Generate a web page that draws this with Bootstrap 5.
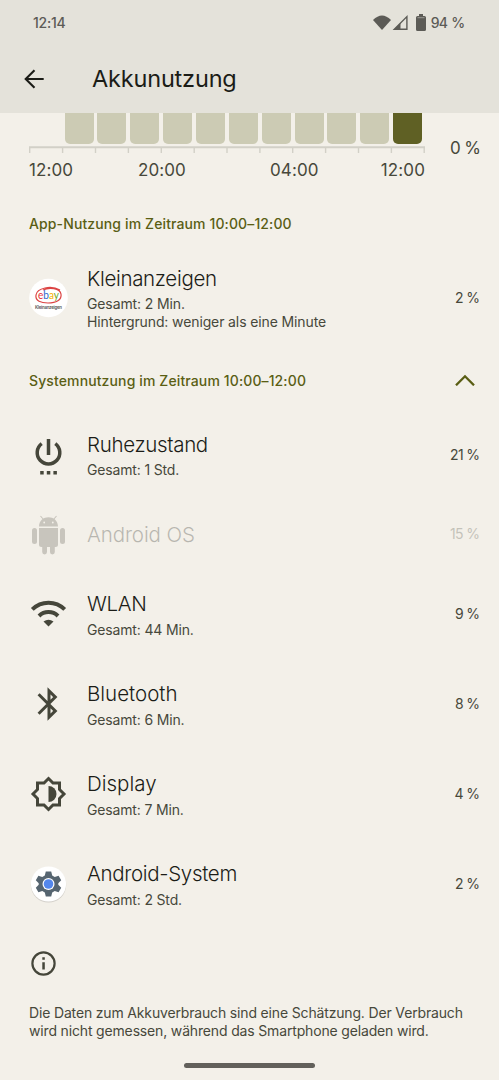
<!DOCTYPE html>
<html lang="de" data-bs-theme="light">
<head>
<meta charset="utf-8">
<meta name="viewport" content="width=device-width, initial-scale=1">
<title>Akkunutzung</title>
<link rel="stylesheet" href="https://cdn.jsdelivr.net/npm/bootstrap@5.3.0/dist/css/bootstrap.min.css">
<style>
  body { font-family: Inter, "Liberation Sans", sans-serif; background: #f3f0e9; color: #1b1c17; height: 1080px; overflow: hidden; }
  .top-area { background: #e4e2da; height: 113px; }
  .status-row { height: 46px; padding: 0 34.5px 1px 33px; color: #5c5b56; font-size: 14px; font-weight: 500; }
  .clock { letter-spacing: -.25px; }
  .battery { margin-left: -7px; }
  .level { letter-spacing: -.7px; word-spacing: 1px; margin-left: 4.5px; }
  .title-row { height: 66px; padding-left: 24px; }
  .screen-title { font-size: 23.5px; line-height: 30px; font-weight: 370; margin-left: 48px; letter-spacing: -.18px; }
  .chart-area { height: 91px; padding-left: 29px; }
  .plot { width: 396px; }
  .bar-row { height: 31px; padding-left: 35.6px; gap: 3.87px; }
  .usage-bar { width: 29px; height: 31px; background: #cccbb4; border-radius: 0 0 5px 5px; }
  .usage-bar.current { background: #5f6024; }
  .axis { display: block; margin-top: 2px; }
  .time-row { height: 24px; margin-top: 4.500px; font-size: 17px; line-height: 24px; color: #47483b; letter-spacing: .1px; }
  .time-row > :nth-child(1) { width: 109px; }
  .time-row > :nth-child(2) { width: 132px; }
  .zero-label { font-size: 17px; line-height: 24px; color: #47483b; margin: 23px 0 0 25px; letter-spacing: -.6px; white-space: nowrap; }
  .section-head { color: #5a5e14; font-size: 14px; font-weight: 550; letter-spacing: .12px; padding: 0 24px 2px 29px; }
  .h-first { height: 40px; }
  .h-second { height: 58px; }
  .usage-row { height: 90px; padding: 0 19.500px 0 29px; }
  .row-tall { height: 108px; }
  .row-short { height: 69px; }
  .row-icon { width: 39px; height: 40px; margin-right: 19px; }
  .name { font-size: 20.5px; line-height: 28px; margin-bottom: 2px; font-weight: 360; letter-spacing: -.32px; }
  .name.loose { letter-spacing: 0; }
  .row-short .name { margin: 0; letter-spacing: -.1px; }
  .detail { font-size: 14px; line-height: 18px; color: #47483b; letter-spacing: -.12px; white-space: nowrap; }
  .usage-row:not(.row-tall) .detail { letter-spacing: -.16px; }
  .row-short ~ .usage-row .detail { margin-bottom: -1px; position: static; padding-top: 1px; line-height: 18px; }
  .share { font-size: 14px; color: #47483b; letter-spacing: -.6px; padding-bottom: 1.500px; }
  .faded { opacity: .27; }
  .note { padding: 21px 29px 0; }
  .note p { font-size: 14px; line-height: 18px; color: #47483b; margin: 26px 0 0; letter-spacing: -.16px; white-space: nowrap; }
  .home-pill { width: 131px; height: 5px; background: #62605b; margin-top: 22.5px; }
</style>
<script src="https://cdn.jsdelivr.net/npm/bootstrap@5.3.0/dist/js/bootstrap.bundle.min.js"></script>
</head>
<body class="d-flex flex-column">
<header class="top-area">
  <div class="status-row d-flex align-items-center">
    <span class="clock">12:14</span>
    <svg class="ms-auto" width="50" height="20" viewBox="0 0 50 20"><path d="M0 7Q9-2 18 7L9 17Z" fill="#5c5b56"/><path d="M33.900 3.600V16.300H21.300Z" fill="none" stroke="#5c5b56" stroke-width="1.4"/><path d="M20.500 17L27.500 9.800V17Z" fill="#5c5b56"/></svg>
    <svg class="battery" width="10" height="17" viewBox="0 0 10 17"><path d="M3 0h4v2h1.500A1.500 1.500 0 0 1 10 3.500V15.500A1.500 1.500 0 0 1 8.500 17h-7A1.500 1.500 0 0 1 0 15.500V3.500A1.500 1.500 0 0 1 1.500 2H3z" fill="#5c5b56"/><path d="M1.500 3.700h7" stroke="#9b9993" stroke-width="1"/></svg>
    <span class="level">94 %</span>
  </div>
  <div class="title-row d-flex align-items-center">
    <svg width="20" height="20" viewBox="0 0 20 20" fill="none" stroke="#1b1c17" stroke-width="2.1"><path d="M19.700 10H2M10.500 1.200L1.700 10l8.800 8.800"/></svg>
    <h1 class="screen-title mb-0">Akkunutzung</h1>
  </div>
</header>
<main>
  <section class="chart-area d-flex">
    <div class="plot">
      <div class="bar-row d-flex">
        <div class="usage-bar"></div><div class="usage-bar"></div><div class="usage-bar"></div><div class="usage-bar"></div><div class="usage-bar"></div><div class="usage-bar"></div><div class="usage-bar"></div><div class="usage-bar"></div><div class="usage-bar"></div><div class="usage-bar"></div><div class="usage-bar current"></div>
      </div>
      <svg class="axis" width="396" height="7" viewBox="0 0 396 7" fill="none" stroke="#d2d0c7" stroke-width="1.400"><path d="M0 1.200H396" stroke-width="2"/><path d="M.7 1v6M33.600 1v6M66.500 1v6M99.400 1v6M132.300 1v6M165.200 1v6M198 1v6M230.900 1v6M263.700 1v6M296.600 1v6M329.500 1v6M362.400 1v6M395.200 1v6"/></svg>
      <div class="time-row d-flex"><span>12:00</span><span>20:00</span><span>04:00</span><span class="ms-auto">12:00</span></div>
    </div>
    <span class="zero-label">0 %</span>
  </section>

  <div class="section-head h-first d-flex align-items-center"><span>App-Nutzung im Zeitraum 10:00–12:00</span></div>
  <div class="usage-row row-tall d-flex align-items-center">
    <svg class="row-icon" viewBox="0 0 39 40"><circle cx="19.500" cy="20" r="19.300" fill="#fff"/><path d="M31 12C22 7 8 10 7 17c-1 6 5 8 12 8 8 0 14-3 13-9-1-6-12-7-18-4" fill="none" stroke="#dc4444" stroke-width="1.200"/><text x="9" y="21" font-size="10.500" font-family="Lato" textLength="21" lengthAdjust="spacingAndGlyphs"><tspan fill="#e53238">e</tspan><tspan fill="#2c67c8">b</tspan><tspan fill="#f5af02">a</tspan><tspan fill="#73a91c">y</tspan></text><text x="6" y="30.500" font-size="4.400" font-weight="600" fill="#555" textLength="27">Kleinanzeigen</text></svg>
    <div><div class="name">Kleinanzeigen</div><div class="detail">Gesamt: 2 Min.</div><div class="detail">Hintergrund: weniger als eine Minute</div></div>
    <span class="share ms-auto">2 %</span>
  </div>
  <div class="section-head h-second d-flex align-items-center"><span>Systemnutzung im Zeitraum 10:00–12:00</span>
    <svg class="ms-auto" width="20" height="12" viewBox="0 0 20 12" fill="none" stroke="#5a5e14" stroke-width="2.300"><path d="M1 11.300L10 2.300l9 9"/></svg></div>

  <div class="usage-row d-flex align-items-center">
    <svg class="row-icon" viewBox="0 0 39 40"><path d="M12.700 8.600a11.300 11.300 0 1 0 13.600 0M19.500 4v16" fill="none" stroke="#45463a" stroke-width="3.500"/><path d="M11.200 36h3.500v3.500h-3.500zM17.800 36h3.500v3.500h-3.500zM24.400 36h3.500v3.500h-3.500z" fill="#45463a"/></svg>
    <div><div class="name">Ruhezustand</div><div class="detail">Gesamt: 1 Std.</div></div>
    <span class="share ms-auto">21 %</span>
  </div>
  <div class="usage-row row-short d-flex align-items-center">
    <svg class="row-icon" viewBox="0 0 39 40" fill="#c8c5bd"><path d="M10 11.500C10 -1 29 -1 29 11.500zM10 13h19v16.500a2.500 2.500 0 0 1-2.500 2.500h-14a2.500 2.500 0 0 1-2.500-2.500z"/><rect x="3" y="13" width="5" height="16" rx="2.500"/><rect x="31" y="13" width="5" height="16" rx="2.500"/><rect x="13.200" y="25" width="4.800" height="14.500" rx="2.400"/><rect x="21" y="25" width="4.800" height="14.500" rx="2.400"/><path d="M11.500 1l3 3.500M27.500 1l-3 3.500" stroke="#c8c5bd" stroke-width="1.100"/><circle cx="15.200" cy="7.500" r=".9" fill="#f3f0e9"/><circle cx="23.800" cy="7.500" r=".9" fill="#f3f0e9"/></svg>
    <div class="name faded">Android OS</div>
    <span class="share ms-auto faded">15 %</span>
  </div>
  <div class="usage-row d-flex align-items-center">
    <svg class="row-icon" viewBox="0 0 39 40" fill="none" stroke="#45463a" stroke-width="4"><path d="M3.300 15.300a23 23 0 0 1 32.400 0M10 22a13.500 13.500 0 0 1 19 0"/><path d="M19.500 32.500l-5-5q5-3.500 10 0z" fill="#45463a" stroke="none"/></svg>
    <div><div class="name">WLAN</div><div class="detail">Gesamt: 44 Min.</div></div>
    <span class="share ms-auto">9 %</span>
  </div>
  <div class="usage-row d-flex align-items-center">
    <svg class="row-icon" viewBox="0 0 39 40" fill="none" stroke="#45463a" stroke-width="3"><path d="M9.600 10.200L26.300 26.900l-6.300 6.300V6.800l6.300 6.300L9.600 29.800"/></svg>
    <div><div class="name loose">Bluetooth</div><div class="detail">Gesamt: 6 Min.</div></div>
    <span class="share ms-auto">8 %</span>
  </div>
  <div class="usage-row d-flex align-items-center">
    <svg class="row-icon" viewBox="0 0 39 40"><path d="M19.500 4.500L24 9h6.500v6.500L35 20l-4.500 4.500V31H24l-4.500 4.500L15 31H8.500v-6.500L4 20l4.500-4.500V9H15z" fill="none" stroke="#45463a" stroke-width="3"/><path d="M19.500 12a8 8 0 0 1 0 16z" fill="#45463a"/></svg>
    <div><div class="name loose">Display</div><div class="detail">Gesamt: 7 Min.</div></div>
    <span class="share ms-auto">4 %</span>
  </div>
  <div class="usage-row d-flex align-items-center">
    <svg class="row-icon" viewBox="0 0 39 40"><circle cx="19.500" cy="20.900" r="17.700" fill="#d3d0ca"/><circle cx="19.500" cy="20" r="17.600" fill="#fff"/><path d="M16.800 7.500h5.400l1 4 2.500 1.500 3.900-1.300 2.600 4.600-2.900 3v1.400l2.900 3-2.600 4.600-3.900-1.300-2.500 1.500-1 4h-5.400l-1-4-2.500-1.500-3.900 1.300-2.600-4.600 2.900-3v-1.400l-2.900-3 2.600-4.600 3.900 1.300 2.500-1.500z" fill="#566570"/><circle cx="19.500" cy="20" r="6" fill="#fff"/><circle cx="19.500" cy="20" r="4.800" fill="#5487ec"/></svg>
    <div><div class="name">Android-System</div><div class="detail">Gesamt: 2 Std.</div></div>
    <span class="share ms-auto">2 %</span>
  </div>

  <footer class="note">
    <svg class="d-block" width="28" height="28" viewBox="0 0 28 28"><circle cx="14.500" cy="13.500" r="11.100" fill="none" stroke="#45463a" stroke-width="2.200"/><path d="M13.300 12.200h2.500v7.300h-2.500zM13.300 7.300h2.500v2.500h-2.500z" fill="#45463a"/></svg>
    <p>Die Daten zum Akkuverbrauch sind eine Schätzung. Der Verbrauch<br>wird nicht gemessen, während das Smartphone geladen wird.</p>
  </footer>
  <div class="home-pill rounded-pill mx-auto"></div>
</main>
</body>
</html>
